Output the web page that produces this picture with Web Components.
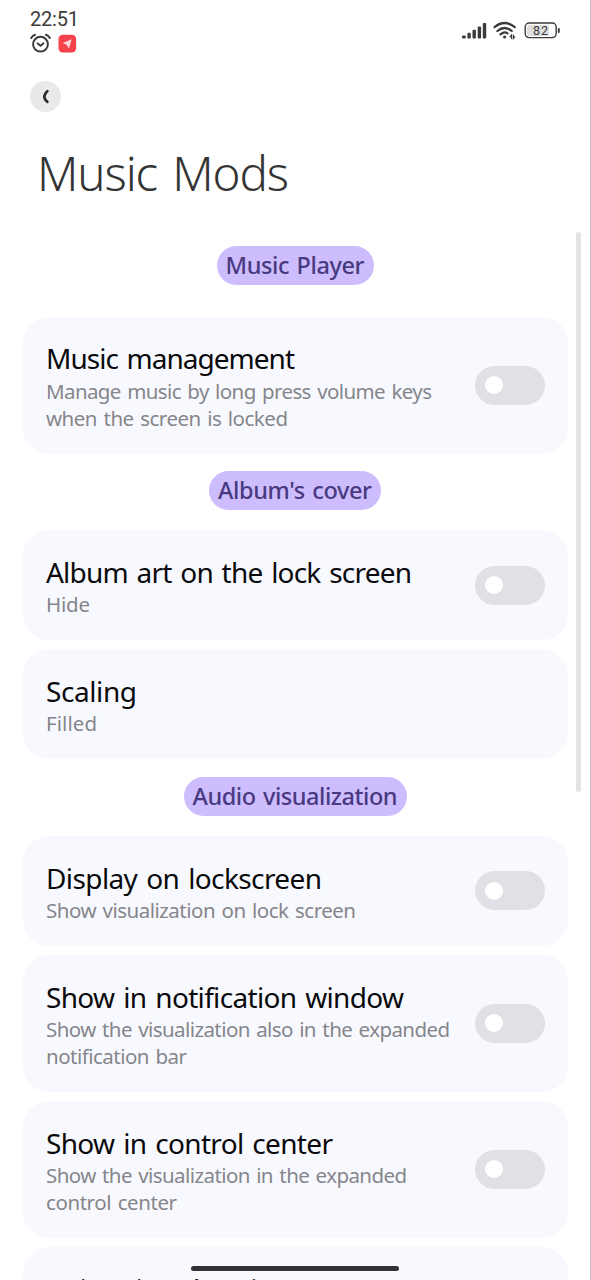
<!DOCTYPE html>
<html lang="en">
<head>
<meta charset="utf-8">
<title>Music Mods</title>
<style>
html,body{margin:0;height:1280px;overflow:hidden;background:#fff}
body{font-family:"Noto Sans",Roboto,sans-serif}
</style>
</head>
<body>
<settings-screen></settings-screen>
<script>
// One line of text whose tracking is adjusted to fill a given width.
class FitText extends HTMLElement{
  constructor(){
    super();
    this.attachShadow({mode:'open'}).innerHTML=`<style>:host{display:block;white-space:nowrap}span{display:inline-block;white-space:pre;vertical-align:top;word-spacing:.08em}</style><span></span>`;
  }
  connectedCallback(){
    const s=this.shadowRoot.querySelector('span'),t=this.getAttribute('text');
    s.textContent=t;
    const w=parseFloat(this.getAttribute('w'));
    if(w){
      const d=(w-s.getBoundingClientRect().width)/(t.length-1);
      s.style.letterSpacing=d+'px';
      s.style.marginRight=-d+'px';
    }
  }
}
class StatusBar extends HTMLElement{
  constructor(){
    super();
    this.attachShadow({mode:'open'}).innerHTML=`<style>
:host{display:flex;justify-content:space-between;height:71px;padding:0 30px;box-sizing:border-box;color:#3b3b3b;font-family:Roboto,sans-serif}
.left{padding-top:8px}
.time{font-size:20px;line-height:23px}
.icons{display:flex;gap:7px;margin-top:1.5px}
.right{display:flex;gap:6px;padding-top:21px;align-items:flex-start}
svg{display:block}
.bat{position:relative;width:36px;height:19px;margin-left:1px}
.bat fit-text{position:absolute;left:9px;top:2px;font-size:12.5px;line-height:15px}
</style>
<div class="left"><fit-text class="time" text="22:51" w="49"></fit-text>
<div class="icons">
<svg width="21" height="21" viewBox="0 0 21 21" fill="none" stroke="#3b3b3b" stroke-width="2" stroke-linecap="round" stroke-linejoin="round"><circle cx="10.5" cy="11.2" r="7.4"/><path d="M1.2 5Q2.5 2.6 5 1.8M19.8 5Q18.5 2.6 16 1.8M7.7 10.4l2.8 2.3 2.8-2.3"/></svg>
<svg width="19" height="21" viewBox="0 0 19 21"><rect x=".5" y="1.8" width="17.6" height="17.6" rx="4.2" fill="#f5424b"/><path d="M13.7 6.2L4.8 10.1l3.7 1.6 2.5 3.8z" fill="#ffd5d8"/></svg>
</div></div>
<div class="right">
<svg width="25" height="19" viewBox="0 0 25 19" fill="#3b3b3b"><rect y="14.6" width="3.8" height="2.9" rx="1"/><rect x="5.4" y="11.8" width="3.4" height="5.7" rx="1"/><rect x="10.5" y="8.8" width="3.4" height="8.7" rx="1"/><rect x="15.7" y="5.6" width="3.4" height="11.9" rx="1"/><rect x="20.8" y="2" width="3.4" height="15.5" rx="1"/></svg>
<svg width="24" height="19" viewBox="0 0 24 19" fill="none" stroke="#3b3b3b" stroke-width="2.2" stroke-linecap="round"><path d="M1.5 6.2Q11.5-2.2 21.8 6.2M4.4 10Q11.5 4 18.8 10M7.4 13.4Q11.5 10.2 14.5 12.3"/><circle cx="11.6" cy="16" r="1.6" fill="#3b3b3b" stroke="none"/><path stroke-width="1.2" d="M18.5 17.5v-3.4l-1.4 1.6M20.4 14.1v3.4l1.4-1.6"/></svg>
<div class="bat"><svg width="36" height="19" viewBox="0 0 36 19"><rect x="3" y="4" width="22" height="11" rx="2" fill="#dedede"/><rect x="1.2" y="2" width="31" height="14.6" rx="4" fill="none" stroke="#3b3b3b" stroke-width="1.4"/><rect x="33.8" y="7" width="2" height="5" rx="1" fill="#3b3b3b"/></svg><fit-text text="82" w="15"></fit-text></div>
</div>`;
  }
}
class BackButton extends HTMLElement{
  constructor(){
    super();
    this.attachShadow({mode:'open'}).innerHTML=`<style>:host{display:block;padding:10px 30px 0}svg{display:block}</style>
<svg width="31" height="31" viewBox="0 0 31 31"><circle cx="15.5" cy="15.5" r="15.5" fill="#e9e9e9"/><path d="M17.3 10.2Q11.2 15.5 17.3 20.8" fill="none" stroke="#2b2b2b" stroke-width="2.8" stroke-linecap="round"/></svg>`;
  }
}
class SectionLabel extends HTMLElement{
  constructor(){
    super();
    this.attachShadow({mode:'open'}).innerHTML=`<style>
:host{display:flex;justify-content:center;margin:17.3px 1px 20.4px 0}
div{height:39px;border-radius:19.5px;background:#cdbdff;color:#493a7f;padding:0 9px;font-size:23.5px;line-height:39px;font-weight:500}
</style><div><fit-text text="${this.getAttribute('text')}" w="${this.getAttribute('w')}"></fit-text></div>`;
  }
}
class ToggleSwitch extends HTMLElement{
  constructor(){
    super();
    this.attachShadow({mode:'open'}).innerHTML=`<style>
:host{display:flex;align-items:center;flex:none;width:70px;height:39px;border-radius:20px;background:#e1e0e6;box-sizing:border-box;padding-left:10px}
i{width:18px;height:18px;border-radius:50%;background:#fff}
</style><i></i>`;
  }
}
class SettingCard extends HTMLElement{
  constructor(){
    super();
    this.attachShadow({mode:'open'}).innerHTML=`<style>
:host{display:flex;align-items:center;justify-content:space-between;box-sizing:border-box;background:#f8f9ff;border-radius:26px;padding:23.6px 23px 22.1px;margin-bottom:9.4px}
:host([last]){margin-bottom:0}
.t{font-size:28px;line-height:36px;color:#0a0a0c}
.s{display:block;color:#85868b;font-size:20.5px;line-height:26.9px;margin-top:1.2px}
slot[name=control]{display:block}
::slotted(toggle-switch){margin-top:-1.8px}
</style><div><fit-text class="t" text="${this.getAttribute('text')}" w="${this.getAttribute('w')}"></fit-text><div class="s"><slot></slot></div></div><slot name="control"></slot>`;
  }
}
class SettingsScreen extends HTMLElement{
  constructor(){
    super();
    this.attachShadow({mode:'open'}).innerHTML=`<style>
:host{display:block;position:relative;width:591px;height:1280px;box-sizing:border-box;border-right:1px solid #c6c6c6;overflow:hidden}
h1{margin:33px 0 0 37px;font-size:47.5px;line-height:56px;font-weight:300;color:#343434}
main{padding:0 22px 0 23px;margin-top:44.9px}
.first{margin-top:0;margin-bottom:32px}
.scroll{position:absolute;right:9px;top:232px;width:5px;height:560px;border-radius:3px;background:#e4e4e4}
.home{position:absolute;left:191px;top:1266px;width:208px;height:5px;border-radius:3px;background:#333336}
</style>
<status-bar></status-bar>
<back-button></back-button>
<h1><fit-text text="Music Mods" w="252"></fit-text></h1>
<main>
<section-label class="first" text="Music Player" w="139"></section-label>
<setting-card text="Music management" w="249" last><fit-text text="Manage music by long press volume keys" w="386"></fit-text><fit-text text="when the screen is locked" w="242"></fit-text><toggle-switch slot="control"></toggle-switch></setting-card>
<section-label text="Album's cover" w="154"></section-label>
<setting-card text="Album art on the lock screen" w="366"><fit-text text="Hide" w="44"></fit-text><toggle-switch slot="control"></toggle-switch></setting-card>
<setting-card text="Scaling" w="91" last><fit-text text="Filled" w="51"></fit-text></setting-card>
<section-label text="Audio visualization" w="205"></section-label>
<setting-card text="Display on lockscreen" w="276"><fit-text text="Show visualization on lock screen" w="310"></fit-text><toggle-switch slot="control"></toggle-switch></setting-card>
<setting-card text="Show in notification window" w="358"><fit-text text="Show the visualization also in the expanded" w="404"></fit-text><fit-text text="notification bar" w="141"></fit-text><toggle-switch slot="control"></toggle-switch></setting-card>
<setting-card text="Show in control center" w="287"><fit-text text="Show the visualization in the expanded" w="361"></fit-text><fit-text text="control center" w="131"></fit-text><toggle-switch slot="control"></toggle-switch></setting-card>
<setting-card text="Animation duration" w="244"></setting-card>
</main>
<div class="scroll"></div><div class="home"></div>`;
  }
}
customElements.define('fit-text',FitText);
customElements.define('status-bar',StatusBar);
customElements.define('back-button',BackButton);
customElements.define('section-label',SectionLabel);
customElements.define('toggle-switch',ToggleSwitch);
customElements.define('setting-card',SettingCard);
customElements.define('settings-screen',SettingsScreen);
</script>
</body>
</html>
